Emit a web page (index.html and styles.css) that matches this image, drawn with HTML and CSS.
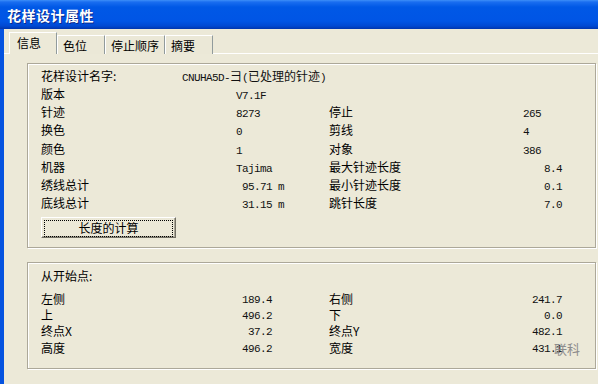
FILE: index.html
```html
<!DOCTYPE html>
<html lang="zh-CN">
<head>
  <meta charset="UTF-8" />
  <meta name="viewport" content="width=device-width, initial-scale=1" />
  <title>花样设计属性</title>
  <link rel="stylesheet" href="styles.css">
</head>
<body>
  <div class="window">
    <div class="titlebar"><span class="title">花样设计属性</span></div>

    <div class="frame">
      <div class="tabs">
        <div class="tab active">信息</div>
        <div class="tab">色位</div>
        <div class="tab wide">停止顺序</div>
        <div class="tab">摘要</div>
      </div>

      <div class="panel">
        <div class="group info">
          <div class="name-row">
            <span class="name-label">花样设计名字:</span>
            <span class="val">CNUHA5D-<span class="cjk">彐</span>(<span class="cjk">已处理的针迹</span>)</span>
          </div>

          <div class="grid">
            <div>版本</div><div class="val">V7.1F</div><div></div><div></div>
            <div>针迹</div><div class="val">8273</div><div>停止</div><div class="val">265</div>
            <div>换色</div><div class="val">0</div><div>剪线</div><div class="val">4</div>
            <div>颜色</div><div class="val">1</div><div>对象</div><div class="val">386</div>
            <div>机器</div><div class="val">Tajima</div><div>最大针迹长度</div><div class="val num">8.4</div>
            <div>绣线总计</div><div class="val"><span class="num-box">95.71 m</span></div><div>最小针迹长度</div><div class="val num">0.1</div>
            <div>底线总计</div><div class="val"><span class="num-box">31.15 m</span></div><div>跳针长度</div><div class="val num">7.0</div>
          </div>

          <button class="btn"><span class="btn-focus">长度的计算</span></button>
        </div>

        <div class="group origin">
          <div class="group-title">从开始点:</div>
          <div class="pairs">
            <div class="pair-row">
              <div class="half"><span>左侧</span><span class="val">189.4</span></div>
              <div class="half right"><span>右侧</span><span class="val">241.7</span></div>
            </div>
            <div class="pair-row">
              <div class="half"><span>上</span><span class="val">496.2</span></div>
              <div class="half right"><span>下</span><span class="val">0.0</span></div>
            </div>
            <div class="pair-row">
              <div class="half"><span>终点X</span><span class="val">37.2</span></div>
              <div class="half right"><span>终点Y</span><span class="val">482.1</span></div>
            </div>
            <div class="pair-row">
              <div class="half"><span>高度</span><span class="val">496.2</span></div>
              <div class="half right"><span>宽度</span><span class="val">431.1</span></div>
            </div>
          </div>
          <span class="watermark">联科</span>
        </div>
      </div>
    </div>
  </div>
</body>
</html>
```

FILE: styles.css
```css
html, body {
  margin: 0;
  padding: 0;
  width: 598px;
  height: 384px;
  overflow: hidden;
  background: #ece9d8;
  font-family: "Noto Sans CJK SC", "DejaVu Sans", sans-serif;
  font-size: 12px;
  color: #000;
}

.window {
  height: 384px;
  display: flex;
  flex-direction: column;
}

/* Заголовок вікна в стилі XP */
.titlebar {
  height: 29px;
  flex: none;
  display: flex;
  align-items: center;
  padding-left: 7px;
  background: linear-gradient(#3d8ff8 0, #1a6ef0 2px, #0058e6 7px, #0055e5 21px, #0049d2 26px, #0035ad 29px);
}

.title {
  color: #fff;
  font-weight: bold;
  font-size: 14px;
  letter-spacing: 0.5px;
  text-shadow: 1px 1px #0c2a8c;
}

.frame {
  flex: 1;
  border-left: 4px solid #0553e0;
  padding-top: 3px;
  display: flex;
  flex-direction: column;
}

.tabs {
  display: flex;
  align-items: flex-end;
  height: 22px;
  padding-left: 5px;
  margin-bottom: -1px;
  position: relative;
  z-index: 1;
}

.tab {
  width: 48px;
  height: 19px;
  box-sizing: border-box;
  padding-left: 6px;
  line-height: 20px;
  border-top: 1px solid #fff;
  border-right: 1px solid #919b9c;
  box-shadow: inset 1px 0 #fff;
  background: #ebe8d7;
}

.tab.wide {
  width: 60px;
}

.tab.active {
  height: 22px;
  line-height: 20px;
  padding-left: 7px;
  border-left: 1px solid #fff;
  box-shadow: none;
  background: #ece9d8;
}

.panel {
  flex: 1;
  border-top: 1px solid #fff;
  padding: 9px 0 0 23px;
}

.group {
  position: relative;
  width: 569px;
  box-sizing: border-box;
  border: 1px solid #aca899;
  box-shadow: inset 1px 1px #fff, 1px 1px #fff;
  padding-left: 13px;
}

.info {
  height: 185px;
  padding-top: 2px;
}

.name-row {
  height: 18px;
  display: flex;
  align-items: center;
}

.name-label {
  width: 141px;
  flex: none;
}

.val {
  font-family: "Liberation Mono", "DejaVu Sans Mono", monospace;
  font-size: 11px;
  letter-spacing: -0.6px;
  color: #111;
}

.val .cjk {
  font-family: "Noto Sans CJK SC", sans-serif;
  font-size: 12px;
  letter-spacing: 0;
}

.grid {
  display: grid;
  grid-template-columns: 195px 93px 194px 39px;
  grid-auto-rows: 18.3px;
  align-items: center;
}

.grid .val {
  padding-top: 5px;
}

.num {
  text-align: right;
}

.num-box {
  display: inline-block;
  width: 48px;
  text-align: right;
}

.btn {
  display: block;
  margin-top: 5px;
  width: 135px;
  height: 21px;
  padding: 2px;
  box-sizing: border-box;
  font-family: inherit;
  font-size: 12px;
  background: #ece9d8;
  border: 1px solid;
  border-color: #fff #716f64 #716f64 #fff;
  box-shadow: inset -1px -1px #aca899;
}

.btn-focus {
  display: block;
  height: 15px;
  line-height: 14px;
  border: 1px dotted #000;
}

.origin {
  margin-top: 14px;
  height: 107px;
  padding-top: 5px;
}

.group-title {
  line-height: 16px;
}

.pairs {
  margin-top: 6px;
}

.pair-row {
  display: flex;
  height: 16.3px;
  align-items: center;
}

.half {
  width: 231px;
  display: flex;
  align-items: center;
  justify-content: space-between;
}

.half .val {
  padding-top: 3px;
}

.half.right {
  width: 233px;
  margin-left: 57px;
}

.watermark {
  position: absolute;
  left: 526px;
  top: 78px;
  font-size: 13px;
  line-height: 16px;
  color: #8c8c8c;
}
```
